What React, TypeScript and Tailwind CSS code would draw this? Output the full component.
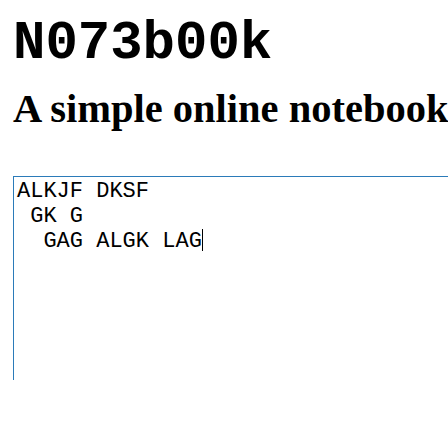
export default function App() {
  return (
    <div className="w-[448px] h-[433px] overflow-hidden bg-white pl-[13px] pt-[17px] flex flex-col">
      <h1 className="font-['Courier_New','Liberation_Mono',monospace] text-[54px] leading-[54px] font-bold text-black whitespace-nowrap">
        N073b00k
      </h1>
      <h2 className="font-['Times_New_Roman','Liberation_Serif',serif] mt-[18px] text-[40.5px] leading-[40px] font-bold text-black whitespace-nowrap">
        A simple online notebook
      </h2>
      <div className="font-['Courier_New','Liberation_Mono',monospace] mt-[47px] w-[480px] h-[204px] shrink-0 border-t border-l border-[#2b7bb9] pl-[3px] pt-[2px] text-[22px] leading-[25px] text-black whitespace-pre">
        {"ALKJF DKSF\n GK G\n  GAG ALGK LAG"}
        <span className="inline-block w-px h-[22px] bg-black align-[-4px]" />
      </div>
    </div>
  );
}
